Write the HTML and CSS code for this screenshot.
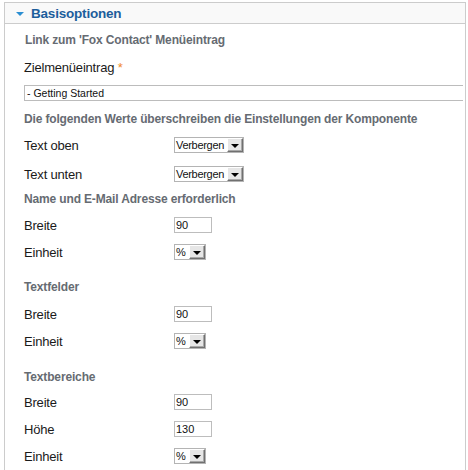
FILE: index.html
```html
<!DOCTYPE html>
<html>
<head>
<meta charset="utf-8">
<link rel="stylesheet" href="styles.css">
</head>
<body>
<div class="panel">
  <div class="panel-head"><span class="tri"></span><span class="title">Basisoptionen</span></div>
  <div class="panel-body">
    <div class="heading h-first">Link zum 'Fox Contact' Menüeintrag</div>
    <div class="label-line">Zielmenüeintrag <span class="star">*</span></div>
    <div class="wide-select">- Getting Started</div>
    <div class="heading h-komp">Die folgenden Werte überschreiben die Einstellungen der Komponente</div>

    <div class="row r-first"><span class="lbl">Text oben</span><span class="sel sel-v"><span class="val">Verbergen</span><span class="btn"><span class="arr"></span></span></span></div>
    <div class="row r-gap13"><span class="lbl">Text unten</span><span class="sel sel-v"><span class="val">Verbergen</span><span class="btn"><span class="arr"></span></span></span></div>

    <div class="heading h-name">Name und E-Mail Adresse erforderlich</div>
    <div class="row r-first"><span class="lbl">Breite</span><span class="inp">90</span></div>
    <div class="row"><span class="lbl">Einheit</span><span class="sel sel-p"><span class="val">%</span><span class="btn"><span class="arr"></span></span></span></div>

    <div class="heading h-sec">Textfelder</div>
    <div class="row r-first2"><span class="lbl">Breite</span><span class="inp">90</span></div>
    <div class="row"><span class="lbl">Einheit</span><span class="sel sel-p"><span class="val">%</span><span class="btn"><span class="arr"></span></span></span></div>

    <div class="heading h-sec2">Textbereiche</div>
    <div class="row r-first3"><span class="lbl">Breite</span><span class="inp">90</span></div>
    <div class="row"><span class="lbl">Höhe</span><span class="inp">130</span></div>
    <div class="row"><span class="lbl">Einheit</span><span class="sel sel-p"><span class="val">%</span><span class="btn"><span class="arr"></span></span></span></div>
  </div>
</div>
</body>
</html>
```

FILE: styles.css
```css
html, body {
  margin: 0;
  padding: 0;
  background: #ffffff;
}
body {
  font-family: "Liberation Sans", Arial, sans-serif;
  color: #1a1a1a;
  overflow: hidden;
  height: 470px;
}
.panel {
  box-sizing: border-box;
  margin: 2px 0 0 4px;
  width: 462px;
  height: 468px;
  border: 1px solid #cccccc;
  border-bottom: none;
}
.panel-head {
  height: 20px;
  background: #f9f9f9;
  border-bottom: 1px solid #cccccc;
  display: flex;
  align-items: center;
  padding-left: 11px;
}
.tri {
  width: 0;
  height: 0;
  border-left: 4px solid transparent;
  border-right: 4px solid transparent;
  border-top: 4px solid #2b8ed2;
  margin-right: 7px;
  margin-top: 1px;
}
.title {
  font-size: 13.5px;
  font-weight: bold;
  color: #1d5e9c;
  letter-spacing: -0.2px;
}
.panel-body {
  padding: 8px 0 0 19px;
}
.heading {
  font-size: 12px;
  line-height: 16px;
  height: 16px;
  font-weight: bold;
  color: #666b72;
  letter-spacing: -0.15px;
  white-space: nowrap;
}
.h-first { margin-top: 0; margin-left: 1px; }
.h-komp { margin-top: 10px; }
.h-name { margin-top: 9px; }
.h-sec { margin-top: 19px; }
.h-sec2 { margin-top: 20px; }
.label-line {
  margin-top: 12px;
  font-size: 13px;
  line-height: 16px;
  height: 16px;
  letter-spacing: -0.2px;
}
.star { color: #f0892b; }
.wide-select {
  margin-top: 9px;
  width: 436px;
  height: 14px;
  border: 1px solid #bcbcbc;
  border-right: none;
  font-size: 10.5px;
  line-height: 14px;
  padding-left: 2px;
  color: #111;
}
.row {
  display: flex;
  align-items: center;
  height: 16px;
  margin-top: 11px;
}
.r-first { margin-top: 10px; }
.r-gap13 { margin-top: 13px; }
.r-first2 { margin-top: 11px; }
.r-first3 { margin-top: 9px; }
.lbl {
  width: 150px;
  font-size: 13px;
  letter-spacing: -0.2px;
}
.inp {
  box-sizing: border-box;
  width: 38px;
  height: 16px;
  border: 1px solid #bdbdbd;
  font-size: 11px;
  line-height: 14px;
  padding-left: 1px;
  color: #111;
}
.sel {
  box-sizing: border-box;
  display: flex;
  height: 16px;
  border: 1px solid #b4b4b4;
  background: #fff;
}
.sel-v { width: 70px; }
.sel-p { width: 32px; }
.val {
  flex: 1;
  font-size: 11px;
  line-height: 14px;
  padding-left: 1px;
  color: #111;
  letter-spacing: -0.3px;
  overflow: hidden;
}
.btn {
  box-sizing: border-box;
  width: 16px;
  height: 14px;
  background: #e6e6e6;
  border-top: 1px solid #ffffff;
  border-left: 1px solid #ffffff;
  border-right: 1px solid #707070;
  border-bottom: 1px solid #707070;
  box-shadow: inset -1px -1px 0 #a8a8a8;
  display: flex;
  align-items: center;
  justify-content: center;
}
.arr {
  width: 0;
  height: 0;
  border-left: 4px solid transparent;
  border-right: 4px solid transparent;
  border-top: 4px solid #000;
  margin-top: 1px;
}
```
